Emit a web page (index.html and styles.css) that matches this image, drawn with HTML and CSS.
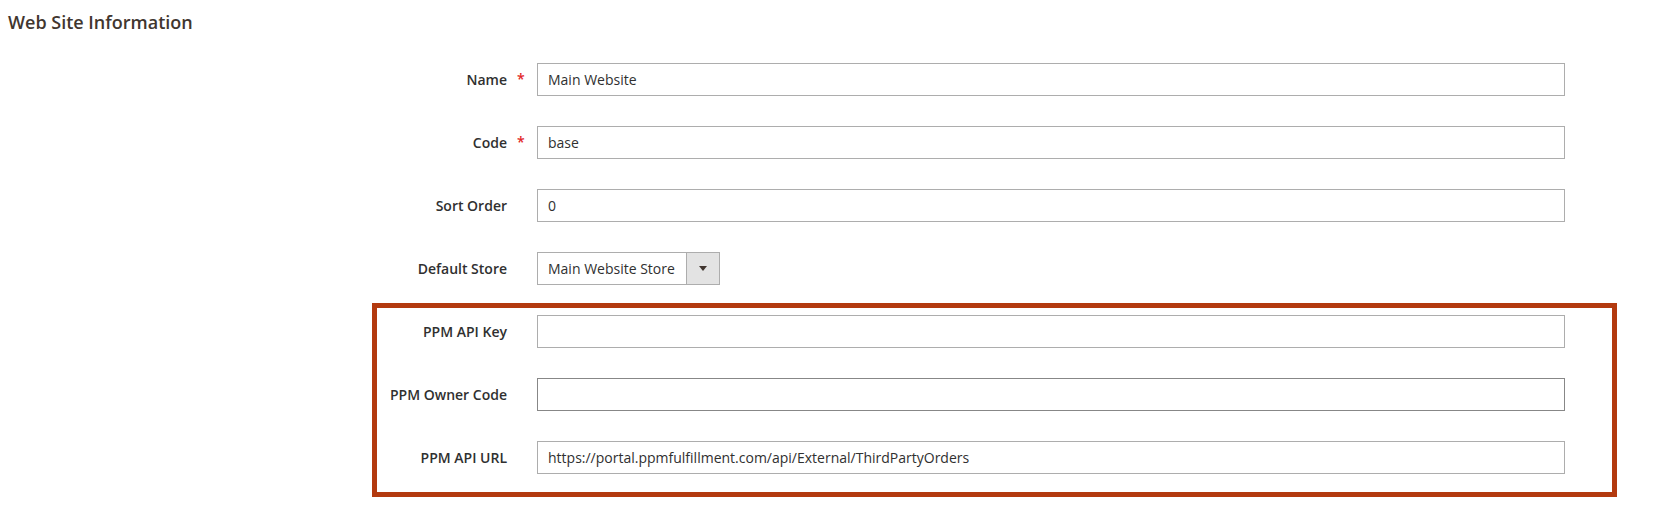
FILE: index.html
```html
<!DOCTYPE html>
<html lang="en">
<head>
<meta charset="utf-8">
<title>Web Site Information</title>
<link rel="stylesheet" href="styles.css">
</head>
<body>
<div class="page">
  <h2 class="legend">Web Site Information</h2>
  <div class="fieldset">
    <div class="field">
      <label class="field-label required"><span>Name</span></label>
      <div class="control"><input class="input" type="text" value="Main Website"></div>
    </div>
    <div class="field">
      <label class="field-label required"><span>Code</span></label>
      <div class="control"><input class="input" type="text" value="base"></div>
    </div>
    <div class="field">
      <label class="field-label"><span>Sort Order</span></label>
      <div class="control"><input class="input" type="text" value="0"></div>
    </div>
    <div class="field">
      <label class="field-label"><span>Default Store</span></label>
      <div class="control">
        <div class="select">
          <span class="select-value">Main Website Store</span>
          <span class="select-button"><span class="select-arrow"></span></span>
        </div>
      </div>
    </div>
    <div class="group">
      <div class="field">
        <label class="field-label"><span>PPM API Key</span></label>
        <div class="control"><input class="input" type="text" value=""></div>
      </div>
      <div class="field">
        <label class="field-label"><span>PPM Owner Code</span></label>
        <div class="control"><input class="input input-hover" type="text" value=""></div>
      </div>
      <div class="field">
        <label class="field-label"><span>PPM API URL</span></label>
        <div class="control"><input class="input" type="text" value="https://portal.ppmfulfillment.com/api/External/ThirdPartyOrders"></div>
      </div>
      <div class="highlight"></div>
    </div>
  </div>
</div>
</body>
</html>
```

FILE: styles.css
```css
html, body {
  margin: 0;
  padding: 0;
  background: #ffffff;
}

body {
  font-family: "Open Sans", "Liberation Sans", sans-serif;
  color: #303030;
}

.page {
  padding: 10px 8px 0 8px;
}

.legend {
  margin: 0;
  font-size: 18px;
  line-height: 24px;
  font-weight: 600;
  color: #41362f;
}

.fieldset {
  margin-top: 29px;
}

.field {
  display: flex;
  align-items: center;
  margin-bottom: 30px;
}

.group .field:last-of-type {
  margin-bottom: 0;
}

.field-label {
  width: 499px;
  flex: none;
  text-align: right;
  font-size: 14px;
  font-weight: 600;
  color: #303030;
  line-height: 20px;
}

.field-label span {
  position: relative;
}

.field-label.required span::after {
  content: "*";
  position: absolute;
  left: calc(100% + 10px);
  top: -1px;
  color: #e22626;
  font-size: 14px;
  font-weight: 600;
}

.control {
  margin-left: 30px;
  width: 1028px;
  flex: none;
}

.input {
  display: block;
  box-sizing: border-box;
  width: 100%;
  height: 33px;
  margin: 0;
  padding: 0 10px;
  border: 1px solid #adadad;
  border-radius: 0;
  background: #ffffff;
  font-family: "Open Sans", "Liberation Sans", sans-serif;
  font-size: 14px;
  color: #303030;
  outline: none;
}

.input-hover {
  border-color: #878787;
}

.select {
  display: flex;
  box-sizing: border-box;
  width: 183px;
  height: 33px;
  border: 1px solid #adadad;
  background: #ffffff;
}

.select-value {
  flex: 1;
  padding-left: 10px;
  font-size: 14px;
  line-height: 31px;
  color: #303030;
  white-space: nowrap;
}

.select-button {
  width: 32px;
  flex: none;
  border-left: 1px solid #adadad;
  background: #e3e3e3;
  display: flex;
  align-items: center;
  justify-content: center;
}

.select-arrow {
  width: 0;
  height: 0;
  border-style: solid;
  border-width: 5px 4px 0 4px;
  border-color: #41362f transparent transparent transparent;
}

.group {
  position: relative;
}

.highlight {
  position: absolute;
  top: -12px;
  bottom: -23px;
  left: 364px;
  right: 44px;
  border: 5px solid #b33a0f;
  pointer-events: none;
}
```
